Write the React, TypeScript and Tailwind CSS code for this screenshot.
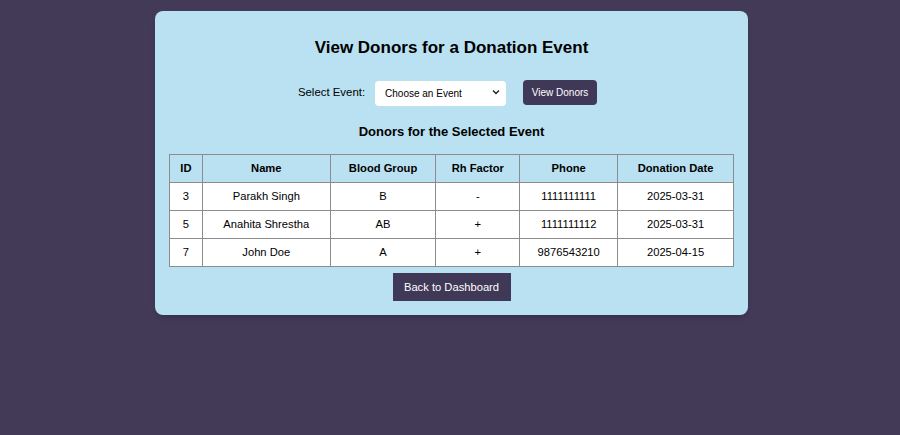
import React, { useState } from 'react';

interface Donor {
  id: number;
  name: string;
  bloodGroup: string;
  rh: string;
  phone: string;
  date: string;
}

const donors: Donor[] = [
  { id: 3, name: 'Parakh Singh', bloodGroup: 'B', rh: '-', phone: '1111111111', date: '2025-03-31' },
  { id: 5, name: 'Anahita Shrestha', bloodGroup: 'AB', rh: '+', phone: '1111111112', date: '2025-03-31' },
  { id: 7, name: 'John Doe', bloodGroup: 'A', rh: '+', phone: '9876543210', date: '2025-04-15' },
];

const columns = [
  { label: 'ID', width: 'w-[33px]' },
  { label: 'Name', width: 'w-[128px]' },
  { label: 'Blood Group', width: 'w-[106px]' },
  { label: 'Rh Factor', width: 'w-[84px]' },
  { label: 'Phone', width: 'w-[98px]' },
  { label: 'Donation Date', width: 'w-[116px]' },
];

const App: React.FC = () => {
  const [event, setEvent] = useState('');

  return (
    <div
      className="min-h-[435px] w-full bg-[#423a57] pt-[11px] pl-[3px] text-black"
      style={{ fontFamily: '"Liberation Sans", Arial, sans-serif' }}
    >
      <div className="mx-auto flex w-[593px] flex-col items-center rounded-lg bg-[#b9e1f1] px-[14px] pt-[27px] pb-[14px] shadow-md">
        {/* Title */}
        <h1 className="text-[17px] leading-[20px] font-bold">View Donors for a Donation Event</h1>

        {/* Event picker */}
        <div className="mt-[22px] flex h-[25px] items-center pr-[8px]">
          <label className="mr-[10px] text-[11.4px]">Select Event:</label>
          <div className="relative h-[25px] w-[131px]">
            <select
              value={event}
              onChange={(e) => setEvent(e.target.value)}
              className="h-full w-full appearance-none rounded-[4px] bg-white pl-[10px] text-[10px] text-black outline-none"
            >
              <option value="">Choose an Event</option>
            </select>
            <svg
              className="pointer-events-none absolute top-[9px] right-[6px]"
              width="8"
              height="6"
              viewBox="0 0 8 6"
            >
              <path d="M1 1.5 L4 4.5 L7 1.5" fill="none" stroke="#222" strokeWidth="1.4" />
            </svg>
          </div>
          <button className="ml-[17px] h-[25px] w-[74px] rounded-[4px] bg-[#3f3857] text-[10px] text-white">
            View Donors
          </button>
        </div>

        {/* Subheading */}
        <h2 className="mt-[19px] text-[13px] leading-[16px] font-bold">Donors for the Selected Event</h2>

        {/* Table */}
        <table className="mt-[14px] w-[565px] border-collapse text-[11.2px]">
          <thead>
            <tr className="h-[28px] bg-[#b9e1f1]">
              {columns.map((c) => (
                <th key={c.label} className={`${c.width} border border-[#8c8c8c] font-bold`}>
                  {c.label}
                </th>
              ))}
            </tr>
          </thead>
          <tbody>
            {donors.map((d) => (
              <tr key={d.id} className="h-[28px] bg-white text-center">
                <td className="border border-[#8c8c8c]">{d.id}</td>
                <td className="border border-[#8c8c8c]">{d.name}</td>
                <td className="border border-[#8c8c8c]">{d.bloodGroup}</td>
                <td className="border border-[#8c8c8c]">{d.rh}</td>
                <td className="border border-[#8c8c8c]">{d.phone}</td>
                <td className="border border-[#8c8c8c]">{d.date}</td>
              </tr>
            ))}
          </tbody>
        </table>

        {/* Back */}
        <button className="mt-[6px] h-[28px] w-[118px] bg-[#3f3857] text-[11.2px] text-white">
          Back to Dashboard
        </button>
      </div>
    </div>
  );
};

export default App;
